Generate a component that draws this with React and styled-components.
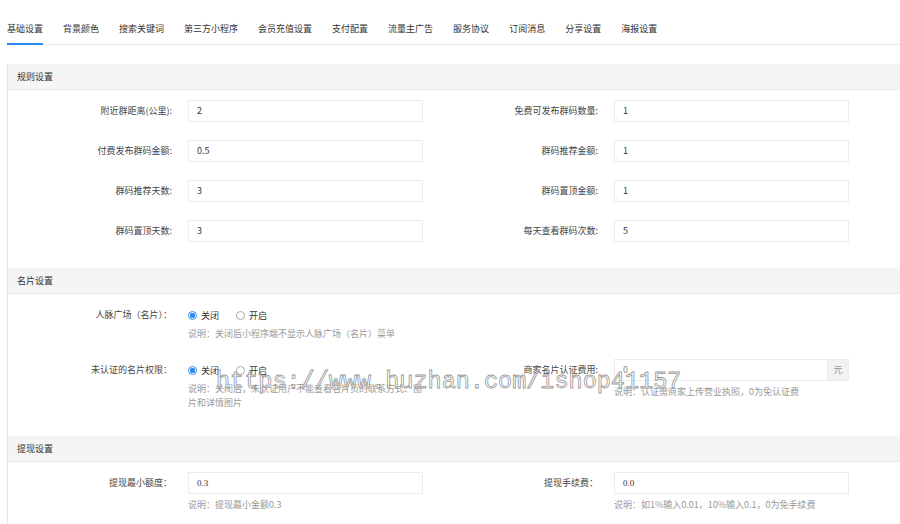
import React from 'react'
import styled, { createGlobalStyle } from 'styled-components'

const GlobalStyle = createGlobalStyle`
  body{
    margin:0;
    background:#fff;
    font-family:"Noto Sans CJK SC","Noto Sans",sans-serif;
    color:#333;
  }
`

const tabs = ['基础设置','背景颜色','搜索关键词','第三方小程序','会员充值设置','支付配置','流量主广告','服务协议','订阅消息','分享设置','海报设置']

function App() {
  return (
    <Page>
      <GlobalStyle />
      <TabBar>
        {tabs.map((t,i)=>(
          <Tab key={t} active={i===0}>{t}</Tab>
        ))}
      </TabBar>

      <Card>
        <Section>
          <SectionHead>规则设置</SectionHead>
          <Body>
            <Field>
              <Label>附近群距离(公里):</Label>
              <Input>2</Input>
            </Field>
            <Field>
              <Label>免费可发布群码数量:</Label>
              <Input>1</Input>
            </Field>
            <Field>
              <Label>付费发布群码金额:</Label>
              <Input>0.5</Input>
            </Field>
            <Field>
              <Label>群码推荐金额:</Label>
              <Input>1</Input>
            </Field>
            <Field>
              <Label>群码推荐天数:</Label>
              <Input>3</Input>
            </Field>
            <Field>
              <Label>群码置顶金额:</Label>
              <Input>1</Input>
            </Field>
            <Field>
              <Label>群码置顶天数:</Label>
              <Input>3</Input>
            </Field>
            <Field>
              <Label>每天查看群码次数:</Label>
              <Input>5</Input>
            </Field>
          </Body>
        </Section>

        <Section>
          <SectionHead>名片设置</SectionHead>
          <Body>
            <Field>
              <Label>人脉广场（名片）：</Label>
              <div>
                <RadioGroup>
                  <Radio><Dot checked />关闭</Radio>
                  <Radio><Dot />开启</Radio>
                </RadioGroup>
                <Hint>说明：关闭后小程序端不显示人脉广场（名片）菜单</Hint>
              </div>
            </Field>
            <div />
            <Field>
              <Label>未认证的名片权限：</Label>
              <div>
                <RadioGroup>
                  <Radio><Dot checked />关闭</Radio>
                  <Radio><Dot />开启</Radio>
                </RadioGroup>
                <Hint>说明：关闭后，未认证用户不能查看名片页的联系方式、图片和详情图片</Hint>
              </div>
            </Field>
            <Field>
              <Label>商家名片认证费用:</Label>
              <div>
                <InputGroup>
                  <Input muted grow>0</Input>
                  <Addon>元</Addon>
                </InputGroup>
                <Hint>说明：认证需商家上传营业执照，0为免认证费</Hint>
              </div>
            </Field>
          </Body>
        </Section>

        <Section>
          <SectionHead>提现设置</SectionHead>
          <Body>
            <Field>
              <Label>提现最小额度：</Label>
              <div>
                <Input serif>0.3</Input>
                <Hint>说明：提现最小金额0.3</Hint>
              </div>
            </Field>
            <Field>
              <Label>提现手续费：</Label>
              <div>
                <Input serif>0.0</Input>
                <Hint>说明：如1%输入0.01，10%输入0.1，0为免手续费</Hint>
              </div>
            </Field>
          </Body>
        </Section>
      </Card>

      <Watermark>https://www.huzhan.com/ishop41157</Watermark>
    </Page>
  )
}

export default App

const Page=styled.div`
  position:relative;
  width:900px;
  height:524px;
  overflow:hidden;
`

const TabBar=styled.nav`
  display:flex;
  margin-left:7px;
  padding-top:15px;
  border-bottom:1px solid #e8e8e8;
  column-gap:20px;
`

const Tab=styled.div`
  font-size:9px;
  line-height:28px;
  color:#333;
  border-bottom:2px solid ${p=>p.active?'#2d8cf0':'transparent'};
  margin-bottom:-1px;
  white-space:nowrap;
`

const Card=styled.div`
  margin:19px 0 0 7px;
  border-left:1px solid #e6e6e6;
`

const Section=styled.section``

const SectionHead=styled.div`
  height:25px;
  line-height:25px;
  padding-left:9px;
  font-size:9px;
  color:#333;
  background:#f5f5f5;
  border-bottom:1px solid #e8e8e8;
`

const Body=styled.div`
  display:grid;
  grid-template-columns:426px 426px;
  row-gap:18px;
  padding:10px 0 26px;
`

const Field=styled.div`
  display:grid;
  grid-template-columns:164px 235px;
  column-gap:16px;
  align-items:start;
`

const Label=styled.div`
  text-align:right;
  font-size:9px;
  line-height:21px;
  color:#444;
  white-space:nowrap;
`

const Input=styled.div`
  box-sizing:border-box;
  height:22px;
  line-height:20px;
  padding-left:8px;
  border:1px solid #ececec;
  font-size:9px;
  color:${p=>p.muted?'#888':'#333'};
  font-family:${p=>p.serif?'"Liberation Serif",serif':'inherit'};
  ${p=>p.grow?'flex:1;border-right:none;':''}
`

const InputGroup=styled.div`
  display:flex;
`

const Addon=styled.div`
  box-sizing:border-box;
  width:22px;
  height:22px;
  line-height:20px;
  text-align:center;
  font-size:9px;
  color:#999;
  background:#f2f2f2;
  border:1px solid #ececec;
`

const RadioGroup=styled.div`
  display:flex;
  align-items:center;
  column-gap:17px;
  height:16px;
  margin-top:3px;
`

const Radio=styled.label`
  display:flex;
  align-items:center;
  column-gap:4px;
  font-size:9px;
  color:#333;
`

const Dot=styled.span`
  box-sizing:border-box;
  width:9px;
  height:9px;
  border-radius:50%;
  border:1px solid ${p=>p.checked?'#2d8cf0':'#aaa'};
  background:${p=>p.checked?'radial-gradient(circle,#2d8cf0 0 2.5px,#fff 3px)':'#fff'};
`

const Hint=styled.div`
  margin-top:4px;
  font-size:9px;
  line-height:14px;
  color:#999;
`

const Watermark=styled.div`
  position:absolute;
  left:216px;
  top:368px;
  font-family:"Liberation Mono",monospace;
  font-size:23.5px;
  color:rgba(255,255,255,0.6);
  -webkit-text-stroke:0.8px #999;
  white-space:nowrap;
  pointer-events:none;
`
